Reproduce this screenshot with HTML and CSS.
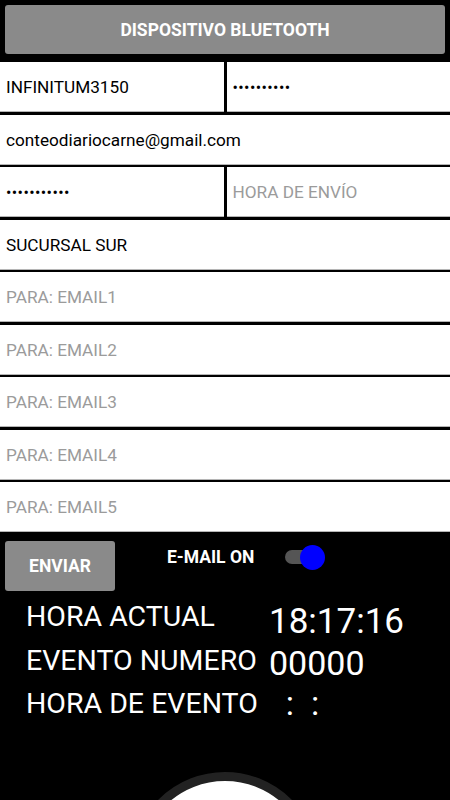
FILE: index.html
```html
<!DOCTYPE html>
<html lang="es">
<head>
    <meta charset="UTF-8">
    <meta name="viewport" content="width=device-width, initial-scale=1.0">
    <title>Conteo diario</title>
    <link rel="stylesheet" href="styles.css">
</head>
<body>
<div class="app">
    <button class="btn btn-bt" type="button">DISPOSITIVO BLUETOOTH</button>

    <form class="fields" id="configForm">
        <input class="field" type="text" value="INFINITUM3150">
        <input class="field dots" type="text" value="••••••••••">
        <input class="field wide" type="text" value="conteodiariocarne@gmail.com">
        <input class="field dots" type="text" value="•••••••••••">
        <input class="field" type="text" placeholder="HORA DE ENVÍO">
        <input class="field wide" type="text" value="SUCURSAL SUR">
        <input class="field wide" type="text" placeholder="PARA: EMAIL1">
        <input class="field wide" type="text" placeholder="PARA: EMAIL2">
        <input class="field wide" type="text" placeholder="PARA: EMAIL3">
        <input class="field wide" type="text" placeholder="PARA: EMAIL4">
        <input class="field wide" type="text" placeholder="PARA: EMAIL5">
    </form>

    <div class="controls">
        <button class="btn btn-send" type="button">ENVIAR</button>
        <span class="switch-label">E-MAIL ON</span>
        <span class="switch"><span class="thumb"></span></span>
    </div>

    <div class="readings">
        <div class="labels">
            <div>HORA ACTUAL</div>
            <div>EVENTO NUMERO</div>
            <div>HORA DE EVENTO</div>
        </div>
        <div class="values">
            <div class="v-time">18:17:16</div>
            <div class="v-count">00000</div>
            <div class="v-event">&nbsp;&nbsp;:&nbsp;&nbsp;:</div>
        </div>
    </div>

    <div class="knob"></div>
</div>
</body>
</html>
```

FILE: styles.css
```css
body {
    margin: 0;
    background-color: #000;
    font-family: Roboto, "Liberation Sans", sans-serif;
    height: 800px;
    overflow: hidden;
}

.app {
    padding-top: 5px;
}

.btn {
    background-color: #8a8a8a;
    color: #fff;
    border: none;
    border-radius: 3px;
    font-family: Roboto, "Liberation Sans", sans-serif;
    font-weight: bold;
    font-size: 17.5px;
    padding: 0;
}

.btn-bt {
    display: block;
    width: 440px;
    height: 49px;
    margin: 0 5px;
}

.fields {
    margin: 8px 0 0;
    display: grid;
    grid-template-columns: 224px 1fr;
    grid-auto-rows: 50px;
    gap: 2.5px;
}

.field {
    border: none;
    margin: 0;
    padding: 0 6px;
    background-color: #fff;
    box-shadow: inset 0 -1px 0 #b5b5b5;
    font-family: Roboto, "Liberation Sans", sans-serif;
    font-size: 17.2px;
    color: #000;
    outline: none;
    min-width: 0;
}

.field::placeholder {
    color: #9b9b9b;
}

.wide {
    grid-column: 1 / 3;
}

.dots {
    font-size: 16px;
    letter-spacing: 0.4px;
}

.controls {
    display: flex;
    align-items: flex-start;
    padding: 9px 5px 0;
}

.btn-send {
    width: 110px;
    height: 50px;
}

.switch-label {
    margin: 6px 0 0 52px;
    color: #fff;
    font-weight: bold;
    font-size: 17.5px;
}

.switch {
    position: relative;
    margin: 9px 0 0 31px;
    width: 34px;
    height: 14px;
    border-radius: 7px;
    background-color: #555;
}

.thumb {
    position: absolute;
    right: -6px;
    top: -5px;
    width: 25px;
    height: 25px;
    border-radius: 50%;
    background-color: #0000ff;
}

.readings {
    display: flex;
    color: #fff;
    padding: 0 0 0 26px;
}

.labels {
    width: 243px;
    font-size: 28.5px;
    line-height: 43.5px;
    margin-top: 4px;
}

.values {
    font-size: 34px;
}

.v-time {
    line-height: 44px;
    font-size: 35px;
    margin-top: 9px;
}

.v-count {
    line-height: 38px;
}

.v-event {
    line-height: 42px;
}

.knob {
    width: 170px;
    height: 170px;
    margin: 46px auto 0;
    border: 9px solid #222;
    border-radius: 50%;
    background-color: #fff;
}
```
